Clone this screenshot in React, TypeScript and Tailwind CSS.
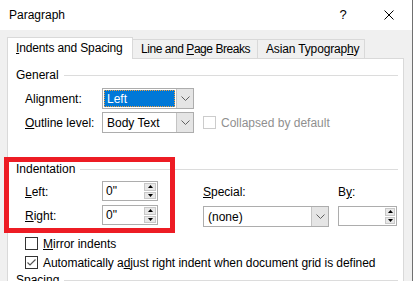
import React from 'react';

export default function App() {
  return (
    <div className="relative w-[413px] h-[281px] overflow-hidden bg-[#f0f0f0] border-r border-[#707070] flex flex-col font-['Liberation_Sans',Arial,sans-serif] text-[12px] leading-[14px] text-black whitespace-nowrap">
      {/* Title bar */}
      <div className="h-[30px] bg-white flex items-center shrink-0">
        <span className="pl-[9px] flex-1">Paragraph</span>
        <div className="w-[46px] h-full flex items-center justify-center text-[13px]">?</div>
        <div className="w-[46px] h-full flex items-center justify-center">
          <svg width="10" height="10" viewBox="0 0 10 10">
            <path d="M0.5 0.5 L9.5 9.5 M9.5 0.5 L0.5 9.5" stroke="#000" strokeWidth="1" fill="none" />
          </svg>
        </div>
      </div>

      <div className="flex flex-col pl-[7px] pr-[8px]">
        {/* Tabs */}
        <div className="flex items-end h-[21px] mt-[7px]">
          <div className="relative z-10 w-[126px] h-[22px] -mb-[1px] bg-white border-x border-t border-[#d9d9d9] flex items-center pl-[8px] pb-[2px] tracking-[-0.15px]">
            <span><u>I</u>ndents and Spacing</span>
          </div>
          <div className="w-[125px] h-[19px] border-t border-r border-[#d9d9d9] flex items-center pl-[8px] tracking-[-0.45px]">
            <span>Line and <u>P</u>age Breaks</span>
          </div>
          <div className="w-[107px] h-[19px] border-t border-r border-[#d9d9d9] flex items-center pl-[8px] tracking-[-0.15px]">
            <span>Asian Typograp<u>h</u>y</span>
          </div>
        </div>

        {/* Panel */}
        <div className="bg-white border border-[#d9d9d9] pl-[8px] pr-[5px] pt-[8px] pb-[60px]">
          <GroupHeader title="General" />

          <div className="flex items-center h-[21px] mt-[5px] pl-[9px]">
            <span className="w-[77px]">Ali<u>g</u>nment:</span>
            <Select className="w-[92px]" value="Left" focused />
          </div>
          <div className="flex items-center h-[21px] mt-[3px] pl-[9px]">
            <span className="w-[77px]"><u>O</u>utline level:</span>
            <Select className="w-[92px]" value="Body Text" />
            <div className="ml-[9px]">
              <CheckBox disabled />
            </div>
            <span className="ml-[5px] text-[#8f8f8f]">Collapsed by default</span>
          </div>

          <div className="mt-[28px]">
            <GroupHeader title="Indentation" />
          </div>
          <div className="flex mt-[4px] pl-[9px]">
            <div className="flex flex-col gap-[4px]">
              <div className="flex items-center h-[20px]">
                <span className="w-[77px] pt-[1px]"><u>L</u>eft:</span>
                <Spin className="w-[56px]" value={'0"'} />
              </div>
              <div className="flex items-center h-[20px]">
                <span className="w-[77px] pt-[1px]"><u>R</u>ight:</span>
                <Spin className="w-[56px]" value={'0"'} />
              </div>
            </div>
            <div className="ml-[45px] flex flex-col w-[126px]">
              <div className="h-[20px] flex items-center pt-[2px]"><span><u>S</u>pecial:</span></div>
              <Select className="w-[126px] mt-[5px] h-[20px]" value="(none)" />
            </div>
            <div className="ml-[9px] flex flex-col w-[59px]">
              <div className="h-[20px] flex items-center pt-[2px]"><span>B<u>y</u>:</span></div>
              <Spin className="w-[59px] mt-[5px]" value="" narrow />
            </div>
          </div>

          <div className="flex items-center h-[13px] mt-[10px] pl-[9px]">
            <CheckBox />
            <span className="ml-[5px]"><u>M</u>irror indents</span>
          </div>
          <div className="flex items-center h-[13px] mt-[6px] pl-[9px]">
            <CheckBox checked />
            <span className="ml-[5px] tracking-[-0.05px]">Automatically a<u>d</u>just right indent when document grid is defined</span>
          </div>

          <div className="mt-[3px]">
            <GroupHeader title="Spacing" />
          </div>
        </div>
      </div>

      {/* red annotation frame */}
      <div className="absolute left-[4px] top-[157px] w-[171px] h-[76px] border-[5px] border-[#ed1c24] pointer-events-none" />
    </div>
  );
}

function GroupHeader({ title }: { title: string }) {
  return (
    <div className="flex items-center h-[16px] gap-[5px]">
      <span>{title}</span>
      <div className="flex-1 h-px bg-[#dcdcdc]" />
    </div>
  );
}

function Chevron() {
  return (
    <svg width="9" height="5" viewBox="0 0 9 5" className="block">
      <polyline points="0.5,0.5 4.5,4.5 8.5,0.5" fill="none" stroke="#606060" strokeWidth="1" />
    </svg>
  );
}

function Select({ className, value, focused }: { className: string; value: string; focused?: boolean }) {
  return (
    <div className={`flex h-[21px] border border-[#adadad] bg-white ${className}`}>
      <div className="flex-1 flex p-[1px]">
        {focused ? (
          <div className="flex-1 flex items-center bg-[#0078d7] text-white border border-dotted border-[#f0a040] pl-[2px]">
            {value}
          </div>
        ) : (
          <div className="flex-1 flex items-center pl-[3px]">{value}</div>
        )}
      </div>
      <div className="w-[17px] bg-[#e5e5e5] border-l border-[#c4c4c4] flex items-center justify-center">
        <Chevron />
      </div>
    </div>
  );
}

function Spin({ className, value, narrow }: { className: string; value: string; narrow?: boolean }) {
  return (
    <div className={`flex h-[20px] border border-[#adadad] bg-white ${className}`}>
      <div className="flex-1 flex items-center pl-[3px]">{value}</div>
      <div className={`flex flex-col p-[1px] gap-[1px] ${narrow ? 'w-[12px]' : 'w-[14px]'}`}>
        <div className="flex-1 bg-[#e8e8e8] border border-[#c8c8c8] flex items-center justify-center">
          <svg width="5" height="3" viewBox="0 0 5 3" className="block">
            <polygon points="0,3 2.5,0 5,3" fill="#000" />
          </svg>
        </div>
        <div className="flex-1 bg-[#e8e8e8] border border-[#c8c8c8] flex items-center justify-center">
          <svg width="5" height="3" viewBox="0 0 5 3" className="block">
            <polygon points="0,0 5,0 2.5,3" fill="#000" />
          </svg>
        </div>
      </div>
    </div>
  );
}

function CheckBox({ checked, disabled }: { checked?: boolean; disabled?: boolean }) {
  return (
    <div className={`w-[13px] h-[13px] border bg-white flex items-center justify-center shrink-0 ${disabled ? 'border-[#cccccc]' : 'border-[#333333]'}`}>
      {checked && (
        <svg width="11" height="11" viewBox="0 0 11 11" className="block">
          <polyline points="1.5,5.5 4,8 9.5,2.5" fill="none" stroke="#555" strokeWidth="1.2" />
        </svg>
      )}
    </div>
  );
}
